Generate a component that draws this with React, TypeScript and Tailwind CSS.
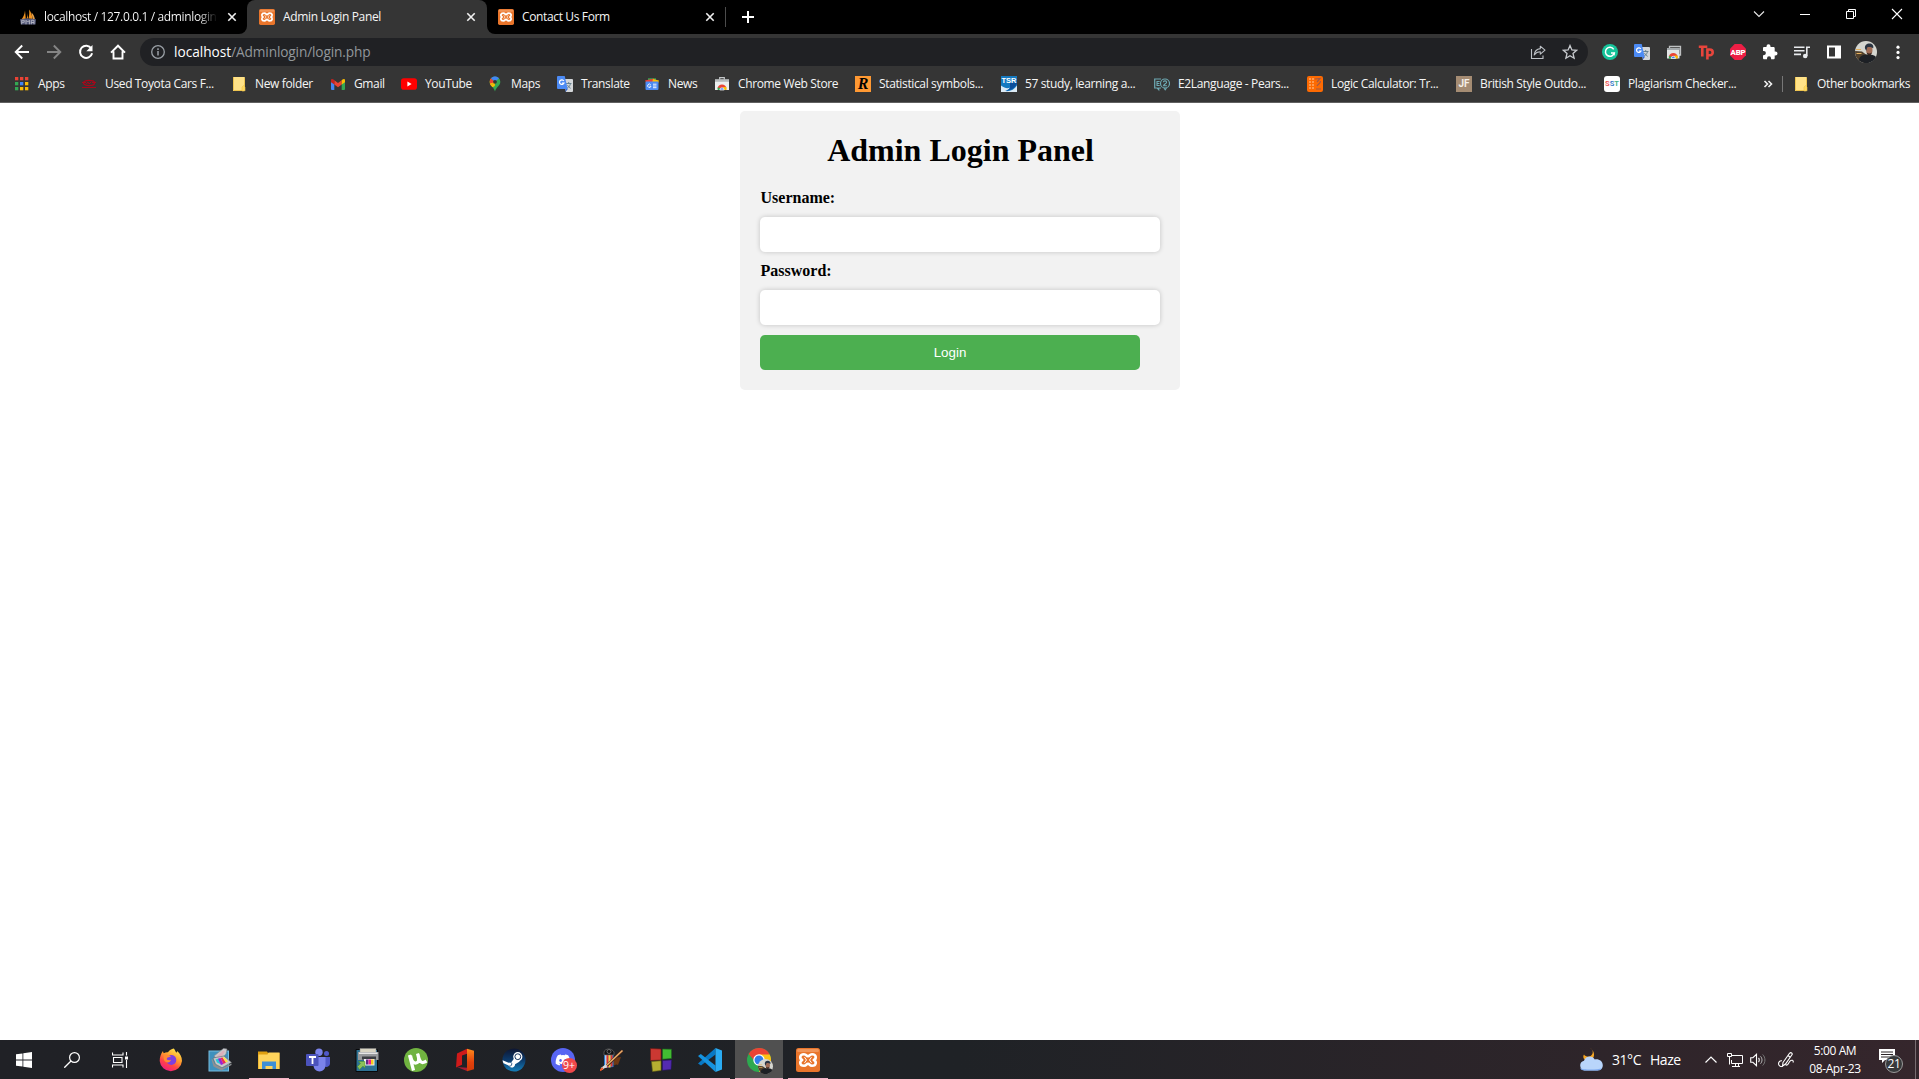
import React from 'react';
import { FaDiscord } from 'react-icons/fa';

type IconProps = { className?: string; children: React.ReactNode; box?: number };

function Svg({ className = 'size-4', children, box = 16 }: IconProps) {
  return (
    <svg className={`${className} shrink-0`} viewBox={`0 0 ${box} ${box}`} fill="none" aria-hidden="true">
      {children}
    </svg>
  );
}

/* ---------- shared glyphs ---------- */

const Xampp = ({ className = 'size-4' }: { className?: string }) => (
  <Svg className={className} box={24}>
    <rect width="24" height="24" rx="2.500" fill="#e9752b" />
    <rect x="1" y="1" width="22" height="3" rx="1.500" fill="#f3a36c" opacity=".7" />
    <path
      d="M8 6.200c-4.600 0-4.600 4.600-1.800 5.800-2.800 1.200-2.800 5.800 1.800 5.800 2.600 0 2.200-2.100 4-2.100s1.400 2.100 4 2.100c4.600 0 4.600-4.600 1.800-5.800 2.800-1.200 2.800-5.800-1.800-5.800-2.600 0-2.200 2.100-4 2.100S10.600 6.200 8 6.200z"
      stroke="#fff"
      strokeWidth="2.600"
      strokeLinejoin="round"
    />
    <path d="M8.500 9.200l2 2.800-2 2.800M15.500 9.200l-2 2.800 2 2.800" stroke="#fff" strokeWidth="1" />
  </Svg>
);

const Close = ({ className = 'size-4' }: { className?: string }) => (
  <Svg className={className}>
    <path d="M4.300 4.300l7.400 7.400M11.700 4.300l-7.400 7.400" stroke="#f1f1f1" strokeWidth="1.600" />
  </Svg>
);

const TranslateIcon = () => (
  <Svg>
    <path d="M6 3h9a1 1 0 011 1v11a1 1 0 01-1 1H9z" fill="#d4d7da" />
    <path d="M9 7.500h5.500M11.700 6v1.500M13.500 7.500c-.5 2.500-2 4-3.500 4.800M10.500 9c.6 1.500 2 2.800 3.200 3.300" stroke="#607d8b" strokeWidth=".9" />
    <path d="M1 0h6.700l3 13H1a1 1 0 01-1-1V1a1 1 0 011-1z" fill="#4c8bf5" />
    <path d="M8.700 13h2.100L8.500 16z" fill="#3367d6" />
    <path d="M6.800 4.900A2.300 2.300 0 107 7H4.900" stroke="#fff" strokeWidth="1.200" />
  </Svg>
);

const Folder = () => (
  <Svg>
    <path d="M2 1h11a1 1 0 011 1v8.500l-1 .5v4H2z" fill="#ffe288" />
    <path d="M2.500 1v13.500H12M13.500 2v8.500" stroke="#eec44f" />
    <path d="M11 15v-4l1.500-1.500L14 11v3.500l-.5.500z" fill="#ffd95e" stroke="#eec44f" strokeWidth=".6" />
  </Svg>
);

const ChromeArc = () => (
  <>
    <path d="M4.200 14a4.200 4.200 0 012-4.300L8 12v2z" fill="#34a853" />
    <path d="M3.600 12a4.500 4.500 0 018.800 0l-1.900 1h-5z" fill="#ea4335" />
    <path d="M9 11h3.200a4.200 4.200 0 01.3 3H9z" fill="#fbbc05" />
    <path d="M3.600 11.500a4 4 0 00.2 2.500H6v-2z" fill="#34a853" />
    <path d="M5.800 14a2.200 2.200 0 014.400 0z" fill="#4285f4" stroke="#fff" strokeWidth=".7" />
  </>
);

const Avatar = ({ className = '' }: { className?: string }) => (
  <Svg className={className} box={22}>
    <circle cx="11" cy="11" r="11" fill="#d5d6d0" />
    <path d="M.1 10L7 10.500l4 3 3 8A11 11 0 01.1 10z" fill="#51402c" />
    <path d="M3.500 19c1.500-4.500 5-5.500 9-5.500s7 .5 8.500 2.500A11 11 0 013.500 19z" fill="#1d2025" />
    <ellipse cx="14.300" cy="9" rx="3.200" ry="4.500" fill="#a06c55" />
    <path d="M10 7.500C9.500 4 12 2.400 14.500 2.500s4.500 1.800 3.700 4.800c-2-1.500-4.500-1.700-5.800-1-.6.800-.6 3-1.200 3.500z" fill="#2a3441" />
    <path d="M11.800 11.500c1.500 1.200 3.500 1.200 5 0-.3 2-1.200 3-2.500 3s-2.200-1-2.500-3z" fill="#33241f" />
    <path d="M1 8.500h5M1.500 12.500h5" stroke="#e5b15c" strokeWidth="1" />
  </Svg>
);

/* ---------- tab strip ---------- */

const PmaIcon = () => (
  <Svg>
    <path d="M5 1.500c-.3 4-1.800 7-4 9.300l4.800-1zM9 .5c2 2.500 3.500 6 3.300 9.500L8.500 9.500C9.300 6.500 9.500 3.500 9 .5zM7.500 3c.2 3-.2 5-1 6.700L8 9.400z" fill="#f0921e" />
    <path d="M11.500 3.500c2 2 3.200 4.500 3.400 7l-2.200-.5z" fill="#e3a04c" />
    <path d="M0 10.300c4-1 11-1 16 0l-.5 5.200H.8z" fill="#54597a" />
    <path d="M1.700 15.300v-4h2.500v2H2M6 15.300v-4l1.700 1.700 1.700-1.700v4M11.300 15.300v-4h2.700v4M11.300 13.500H14" stroke="#b9bac6" strokeWidth=".9" />
  </Svg>
);

function TabStrip() {
  return (
    <div className="flex h-[34px] bg-[#353535] text-[12px] tracking-[-0.360px]">
      <div className="flex w-[247px] items-center rounded-br-lg bg-black pl-5">
        <PmaIcon />
        <span className="ml-2 w-[176px] overflow-hidden whitespace-nowrap bg-linear-to-r from-white from-88% to-black bg-clip-text text-transparent">
          localhost / 127.0.0.1 / adminlogin
        </span>
        <Close className="ml-1 size-4" />
      </div>
      <div className="flex bg-black">
        <div className="flex w-[240px] items-center rounded-t-lg bg-[#353535] pl-3">
          <Xampp />
          <span className="ml-2 w-[180px] whitespace-nowrap">Admin Login Panel</span>
          <Close />
        </div>
      </div>
      <div className="flex grow rounded-bl-lg bg-black">
        <div className="flex w-[238px] items-center pl-[11px]">
          <Xampp />
          <span className="ml-2 grow whitespace-nowrap">Contact Us Form</span>
          <Close className="mr-[7px] size-4" />
        </div>
        <div className="mt-[7px] h-5 w-px bg-[#4c4c4c]" />
        <Svg className="ml-[14px] mt-[9px] size-4">
          <path d="M8 2v12M2 8h12" stroke="#fff" strokeWidth="2" />
        </Svg>
        <div className="ml-auto flex w-[184px] pt-[6px]">
          <Svg className="ml-4 size-4">
            <path d="M3 5.500l5 5 5-5" stroke="#e8e8e8" strokeWidth="1.100" />
          </Svg>
          <Svg className="ml-[30px] size-4">
            <path d="M3 8.500h10" stroke="#fff" />
          </Svg>
          <Svg className="ml-[30px] size-4">
            <path d="M3.500 5.500h7v7h-7zM5.500 5.500v-2h7v7h-2" stroke="#fff" />
          </Svg>
          <Svg className="ml-[30px] size-4">
            <path d="M3 3l10 10M13 3L3 13" stroke="#fff" strokeWidth="1.100" />
          </Svg>
        </div>
      </div>
    </div>
  );
}

/* ---------- toolbar ---------- */

function Toolbar() {
  return (
    <div className="flex h-9 items-center bg-[#353535] pl-[14px]">
      <Svg>
        <path d="M15 8H2M8.200 1.500L1.700 8l6.500 6.500" stroke="#fff" strokeWidth="1.900" />
      </Svg>
      <Svg className="ml-4 size-4">
        <path d="M1 8h13M7.800 1.500L14.300 8l-6.500 6.500" stroke="#858585" strokeWidth="1.900" />
      </Svg>
      <Svg className="ml-4 size-4">
        <path d="M13.300 4.500A6.100 6.100 0 1014.100 9.200" stroke="#fff" strokeWidth="2" />
        <path d="M14.500 1v6.200H8.300z" fill="#fff" />
      </Svg>
      <Svg className="ml-4 size-4">
        <path d="M1 8.600L8 1.700l7 6.900M3.500 7.200v7.300h9V7.200" stroke="#fff" strokeWidth="1.900" />
      </Svg>
      <div className="ml-[14px] flex h-7 w-[1448px] items-center rounded-full bg-[#202124] pl-[10px] text-[13.700px] tracking-[-0.020px]">
        <Svg>
          <circle cx="8" cy="8" r="6.300" stroke="#9aa0a6" strokeWidth="1.300" />
          <path d="M8 7v4.500M8 4.300v1.600" stroke="#9aa0a6" strokeWidth="1.500" />
        </Svg>
        <span className="ml-2 grow whitespace-nowrap text-white">
          localhost<span className="tracking-[-0.140px] text-[#92979b]">/Adminlogin/login.php</span>
        </span>
        <Svg className="mr-4 size-4">
          <path d="M1.500 5v9.500h11.500v-3" stroke="#bdc1c6" strokeWidth="1.100" />
          <path d="M10.300 2.200l4.700 4-4.700 4V7.800C7.500 7.800 5.600 9 4.200 11c.4-3.500 2.500-6 6.100-6.400z" stroke="#bdc1c6" strokeWidth="1.100" strokeLinejoin="round" />
        </Svg>
        <Svg className="mr-[10px] size-4">
          <path d="M8 1.500l1.900 4.400 4.700.4-3.600 3.200 1.100 4.700L8 11.700l-4.100 2.500L5 9.500 1.400 6.300l4.700-.4z" stroke="#c8cbcf" strokeWidth="1.300" />
        </Svg>
      </div>
      <div className="ml-[14px] flex items-center gap-4">
        <Svg>
          <circle cx="8" cy="8" r="8" fill="#15c39a" />
          <path d="M11.700 5.300A4.500 4.500 0 1012.300 9H9" stroke="#fff" strokeWidth="1.500" />
          <path d="M12.700 8.200v3.500l-2-1.700z" fill="#fff" />
        </Svg>
        <TranslateIcon />
        <Svg>
          <path d="M3.500 5V2.500h11v8.500H13" stroke="#bfc1c2" strokeWidth="1.300" />
          <path d="M1 4h12.500v10.500H1z" fill="#e3e5e6" />
          <path d="M1 4h12.500v2H1z" fill="#a4a9ac" />
          <g transform="translate(-.7 .5)">
            <ChromeArc />
          </g>
        </Svg>
        <Svg>
          <path d="M.8 2.800h8.500M4.300 2v10.500M9.400 15.500v-10h2.300c4 0 4 5.800 0 5.800H10" stroke="#e8453c" strokeWidth="2.600" />
        </Svg>
        <Svg>
          <path d="M4.700 0h6.600L16 4.700v6.600L11.300 16H4.700L0 11.300V4.700z" fill="#ed1e45" />
          <text x="8" y="10.800" textAnchor="middle" fontFamily="Roboto" fontSize="7.800" fontWeight="900" letterSpacing="-.2" fill="#fff">
            ABP
          </text>
        </Svg>
        <Svg>
          <path d="M13.500 7.500h-.8V4.300c0-.8-.6-1.300-1.400-1.300H8.500v-.8a2 2 0 00-4 0V3H2.300C1.500 3 1 3.500 1 4.300V7h.8a2.100 2.100 0 010 4.200H1v2.700c0 .7.500 1.300 1.300 1.300H5v-.8a2 2 0 014.100 0v.8h2.300c.8 0 1.300-.6 1.300-1.300v-2.400h.8a2 2 0 000-4z" fill="#fff" />
        </Svg>
        <Svg>
          <path d="M0 3.200h10.500M0 6.800h10.500M0 10.400h7M12.800 12V3.200H16" stroke="#e8eaed" strokeWidth="1.600" />
          <circle cx="11.200" cy="12" r="2.300" fill="#e8eaed" />
        </Svg>
        <Svg>
          <path d="M1 1.500h14v13H1zM3 3.500v9h6v-9z" fill="#fff" fillRule="evenodd" />
        </Svg>
      </div>
      <Avatar className="ml-[13px] size-[22px]" />
      <Svg className="ml-[13px] size-4">
        <circle cx="8" cy="3.200" r="1.600" fill="#fff" />
        <circle cx="8" cy="8.400" r="1.600" fill="#fff" />
        <circle cx="8" cy="13.600" r="1.600" fill="#fff" />
      </Svg>
    </div>
  );
}

/* ---------- bookmarks ---------- */

const appColors = ['#ea4335', '#ea4335', '#ea4335', '#34a853', '#4285f4', '#fbbc05', '#34a853', '#fbbc05', '#fbbc05'];

const bookmarks: { label: string; slot: string; icon: React.ReactNode }[] = [
  {
    label: 'Apps',
    slot: 'w-[67px]',
    icon: (
      <Svg>
        {appColors.map((c, i) => (
          <rect key={i} x={1 + (i % 3) * 5} y={1 + Math.floor(i / 3) * 5} width="3.300" height="3.300" fill={c} />
        ))}
      </Svg>
    ),
  },
  {
    label: 'Used Toyota Cars F...',
    slot: 'w-[150px]',
    icon: (
      <Svg>
        <ellipse cx="8" cy="7" rx="5.500" ry="2.600" stroke="#a8071a" strokeWidth="1.300" />
        <path d="M1 6.500h4M11 6.500h4M5.500 8l1.500-2 1 2 2-2M1 11.500h14" stroke="#a8071a" strokeWidth="1" />
      </Svg>
    ),
  },
  { label: 'New folder', slot: 'w-[99px]', icon: <Folder /> },
  {
    label: 'Gmail',
    slot: 'w-[71px]',
    icon: (
      <Svg>
        <path d="M1 4.500l3.300 2.400V14H2a1 1 0 01-1-1z" fill="#4285f4" />
        <path d="M15 4.500l-3.300 2.400V14H14a1 1 0 001-1z" fill="#34a853" />
        <path d="M4.300 4.300L8 7l3.700-2.700V8.500L8 11.200 4.300 8.500z" fill="#ea4335" />
        <path d="M1 4.500C1 2.700 2.500 2.700 3.500 3.600l.8.700v4.200L1 6.200z" fill="#c5221f" />
        <path d="M15 4.500c0-1.800-1.500-1.800-2.500-.9l-.8.700v4.200L15 6.200z" fill="#fbbc04" />
      </Svg>
    ),
  },
  {
    label: 'YouTube',
    slot: 'w-[86px]',
    icon: (
      <Svg>
        <rect x="0" y="2.300" width="16" height="11.400" rx="2.800" fill="#f00" />
        <path d="M6.400 5.600l4.200 2.400-4.200 2.400z" fill="#fff" />
      </Svg>
    ),
  },
  {
    label: 'Maps',
    slot: 'w-[70px]',
    icon: (
      <Svg>
        <path d="M8 .5a5.300 5.300 0 00-5.300 5.300C2.700 10 7 11 8 15.500 9 11 13.300 10 13.300 5.800A5.300 5.300 0 008 .5z" fill="#34a853" />
        <path d="M3.500 3L8 6 3.800 9.500C2.400 7.500 2.500 4.800 3.500 3z" fill="#fbbc04" />
        <path d="M4 2.300L8 6 3.200 7.600C2.500 5.500 2.700 3.500 4 2.300z" fill="#ea4335" />
        <path d="M4 2.300C6 0 10 0 12 2.300L8 6z" fill="#4285f4" />
        <path d="M3.800 9.500L8 6l-.2 4L5.500 11.200z" fill="#fbbc04" />
        <circle cx="8" cy="5.800" r="1.900" fill="#353535" />
      </Svg>
    ),
  },
  { label: 'Translate', slot: 'w-[87px]', icon: <TranslateIcon /> },
  {
    label: 'News',
    slot: 'w-[70px]',
    icon: (
      <Svg>
        <path d="M4 2.300h8v4H4z" fill="#34a853" />
        <path d="M1 4.500l9-2 .5 4H2z" fill="#ea4335" />
        <path d="M9 3l6 1.500-1 3H8z" fill="#fbbc04" />
        <rect x="1.500" y="5.500" width="13" height="8.500" rx="1" fill="#4c8bf5" />
        <path d="M6.700 8.700A1.700 1.700 0 107 10.200H5.500M9 8.200h3.500M9 10h3.500M9 11.700h3.500" stroke="#fff" strokeWidth=".9" />
      </Svg>
    ),
  },
  {
    label: 'Chrome Web Store',
    slot: 'w-[141px]',
    icon: (
      <Svg>
        <path d="M5.700 3.500V1.700h4.600v1.800" stroke="#c3c6c8" strokeWidth="1.200" />
        <path d="M1 3.500h14V14H1z" fill="#eceeef" />
        <path d="M1 3.500h14v2.300H1z" fill="#b5b9bb" />
        <ChromeArc />
      </Svg>
    ),
  },
  {
    label: 'Statistical symbols...',
    slot: 'w-[146px]',
    icon: (
      <span className="flex size-4 shrink-0 items-center justify-center bg-[#ff9933] font-['Liberation_Serif'] text-[16px] font-bold italic leading-none tracking-normal text-black">
        R
      </span>
    ),
  },
  {
    label: '57 study, learning a...',
    slot: 'w-[153px]',
    icon: (
      <Svg>
        <rect width="16" height="16" fill="#1579c0" />
        <path d="M0 9.500c4 3 6 3 9 2.300-1.500 1.800-3 2.700-5 3.200 5 .8 9.500-1.500 12-5.500V16H0z" fill="#dceaf5" />
        <path d="M9 11.800c-.5 1.500-2.500 2.500-4 3 5-.3 9-2.800 11-7v-1H9z" fill="#0b4e9b" />
        <text x="8" y="6.500" textAnchor="middle" fontFamily="Liberation Sans" fontSize="7.500" fontWeight="700" letterSpacing="0" fill="#fff">
          TSR
        </text>
      </Svg>
    ),
  },
  {
    label: 'E2Language - Pears...',
    slot: 'w-[153px]',
    icon: (
      <Svg>
        <path d="M7 3H.700v9h2.600l1.400 1.700V12H7" stroke="#6eaab4" strokeWidth="1.200" />
        <path d="M5.700 5.500H3v4h2.700M3 7.500h2.400" stroke="#6eaab4" strokeWidth="1.100" />
        <circle cx="11" cy="7.500" r="4.500" stroke="#6eaab4" strokeWidth="1.200" />
        <path d="M9.400 6.300c0-1.900 3.200-1.900 3.200 0 0 1.300-2.800 1.700-3.100 3.500h3.400M10 12l1.200 1.700L12.500 12" stroke="#6eaab4" strokeWidth="1.100" />
      </Svg>
    ),
  },
  {
    label: 'Logic Calculator: Tr...',
    slot: 'w-[149px]',
    icon: (
      <Svg>
        <rect width="16" height="16" rx="2" fill="#fd6a02" />
        {[2, 5, 8, 11].map((y) => (
          <path key={y} d={`M2 ${y + 1}h2M5 ${y + 1}h2`} stroke="#ff9a4f" strokeWidth="2" />
        ))}
        <path d="M8 3l5-.5L10 6M13.500 5c0 3-2 2-3.500 5M9 13h5" stroke="#a05a48" strokeWidth="1.200" />
      </Svg>
    ),
  },
  {
    label: 'British Style Outdo...',
    slot: 'w-[148px]',
    icon: (
      <span className="flex size-4 shrink-0 items-center justify-center bg-[#a58c73] font-['Roboto'] text-[10px] font-bold leading-none tracking-normal text-[#f4efe8]">
        JF
      </span>
    ),
  },
  {
    label: 'Plagiarism Checker...',
    slot: 'w-[156px]',
    icon: (
      <span className="flex size-4 shrink-0 items-center justify-center rounded-[3px] bg-white font-['Roboto'] text-[7.500px] font-bold leading-none tracking-normal">
        <span className="text-[#ee5a5a]">S</span>
        <span className="text-[#3f7fc8]">S</span>
        <span className="text-[#47b38a]">T</span>
      </span>
    ),
  },
];

function BookmarksBar() {
  return (
    <div className="flex h-[33px] items-center border-b border-[#606060] bg-[#353535] pl-[14px] pb-1 text-[12px] tracking-[-0.360px]">
      {bookmarks.map((b) => (
        <div key={b.label} className={`flex shrink-0 items-center gap-2 whitespace-nowrap ${b.slot}`}>
          {b.icon}
          <span>{b.label}</span>
        </div>
      ))}
      <Svg>
        <path d="M4.500 5l3 3-3 3M8.500 5l3 3-3 3" stroke="#f1f1f1" strokeWidth="1.600" />
      </Svg>
      <div className="ml-[6px] h-4 w-px bg-[#777]" />
      <div className="ml-[10px] flex items-center gap-2 whitespace-nowrap">
        <Folder />
        <span>Other bookmarks</span>
      </div>
    </div>
  );
}

/* ---------- page ---------- */

function LoginCard() {
  const input = 'block h-[35px] w-[400px] rounded-[5px] bg-white px-2.5 shadow-[0_0_5px_rgba(0,0,0,0.2)] outline-none';
  return (
    <form
      className="mx-auto h-[279px] w-[440px] rounded-[5px] bg-[#f2f2f2] p-5 font-['Liberation_Serif',serif] text-black"
      onSubmit={(e) => e.preventDefault()}
    >
      <h1 className="pt-px pl-[2px] text-center text-[32px] font-bold leading-[37px]">Admin Login Panel</h1>
      <label htmlFor="username" className="mt-5 block pl-px text-base font-bold leading-[18px]">
        Username:
      </label>
      <input id="username" className={`mt-[10px] ${input}`} />
      <label htmlFor="password" className="mt-[10px] block pl-px text-base font-bold leading-[18px]">
        Password:
      </label>
      <input id="password" type="password" className={`mt-[10px] ${input}`} />
      <button className="mt-[10px] block h-[35px] w-[380px] rounded-[5px] bg-[#4caf50] pl-px font-['Liberation_Sans',sans-serif] text-[13.330px] text-white">
        Login
      </button>
    </form>
  );
}

/* ---------- taskbar ---------- */

const taskIcons: { name: string; state?: 'open' | 'active'; icon: React.ReactNode }[] = [
  {
    name: 'Firefox',
    icon: (
      <Svg className="size-6" box={24}>
        <defs>
          <linearGradient id="fx" x1="18" y1="2" x2="7" y2="22" gradientUnits="userSpaceOnUse">
            <stop stopColor="#ffe14a" />
            <stop offset=".4" stopColor="#ff9a2e" />
            <stop offset=".7" stopColor="#ff4545" />
            <stop offset="1" stopColor="#f0207c" />
          </linearGradient>
        </defs>
        <path d="M14.800.500c1.200 1.500 1.700 2.800 2.500 4.200.7-.5.800-1.200.8-1.700 3 2.500 4.900 6 4.900 10a11.200 11.200 0 01-22.300 0C.7 9 2 5.500 4 3c0 1 .3 1.800.8 2.300C6 4.500 7.500 4 9 4.200c1.500-2.200 3.500-3.200 5.800-3.700z" fill="url(#fx)" />
        <circle cx="12.300" cy="12" r="5" fill="#7d3fe0" />
        <path d="M5 7c3-1 6 0 7 2.200-2.500-.5-4 .5-4.500 2 1.500 1 3 1.500 4.500.6-.5 2.400-3.500 3.500-6 1.700C4.500 12 4.300 9 5 7z" fill="#ff8b33" />
      </Svg>
    ),
  },
  {
    name: 'Scanner',
    icon: (
      <Svg className="size-6" box={24}>
        <rect x="1" y="3" width="19.500" height="20" fill="#3f91bd" stroke="#76bde0" />
        <path d="M6 8L15.500.5 19 1l-1 5-7 6.500z" fill="#c9cacd" stroke="#85888d" strokeWidth=".6" />
        <path d="M8 9l7-6.500L17 3l-2 4-5 4z" fill="#dcb0bc" />
        <path d="M4 10.500l3 6 7.500 3.500 9-4.500v1.500l-10 5.500-8-4-2-7z" fill="#8d9092" />
        <path d="M5 10l11-2 7.500 6.500-9.500 5.200-6.500-3.500z" fill="#c7c8c9" stroke="#65686b" strokeWidth=".6" />
        <path d="M7.500 11.500l3-1 2.500 6-4-2z" fill="#29c8d8" />
        <path d="M10 10.700l2.500-.7 3 6-2.500 1z" fill="#9923d0" />
        <path d="M12.500 10l2-.5 3.500 5-2.500 1.500z" fill="#ed2959" />
        <path d="M14.500 9.500l1.500-.3 4 4.300-2 1z" fill="#ffe33c" />
      </Svg>
    ),
  },
  {
    name: 'File Explorer',
    state: 'open',
    icon: (
      <Svg className="size-6" box={24}>
        <path d="M1 3.500V21h21.500V5H11l-1-1.500z" fill="#e0a010" />
        <path d="M1.500 6.500h9l1-2h11V21h-21z" fill="#ffd45c" />
        <path d="M5 21v-7.500h14V21h-3.500v-3h-7v3z" fill="#3e8fd6" />
      </Svg>
    ),
  },
  {
    name: 'Teams',
    icon: (
      <Svg className="size-6" box={24}>
        <circle cx="20.500" cy="5.500" r="2.500" fill="#5059c9" />
        <path d="M17 9h7v6.500c0 3-4 4.500-6 2.500z" fill="#5059c9" />
        <circle cx="13" cy="4.300" r="3.700" fill="#7b83eb" />
        <path d="M7.500 9h12v8c0 8.500-12 8.500-12 0z" fill="#7b83eb" />
        <rect y="6" width="12.500" height="12" rx="1" fill="#4b53bc" />
        <path d="M3 9h7M6.500 9v7" stroke="#fff" strokeWidth="1.800" />
      </Svg>
    ),
  },
  {
    name: 'Printer',
    icon: (
      <Svg className="size-6" box={24}>
        <path d="M1 1.500h21.500v22H1z" fill="#2d7294" stroke="#07080a" />
        <path d="M5 .5h16v7H5z" fill="#d9d5c3" stroke="#888" strokeWidth=".5" />
        <path d="M3 4h20.500v8H3z" fill="#97999b" />
        <path d="M4 4.500h18.500V6H4z" fill="#e5e5e5" />
        <path d="M7 8.500h14v3H7z" fill="#3a3d42" />
        <path d="M9 11h10.500v6.500H9z" fill="#f2f2f2" />
        <path d="M11 11.500h2.500v5H11z" fill="#5c2a86" />
        <path d="M13.500 11.500H16v5h-2.500z" fill="#e52294" />
        <path d="M16 11.500h2.500v5H16z" fill="#f8cb1b" />
        <path d="M2.500 18.500L5.500 15.500l-2-2H10V20l-2-2-3.500 3.500z" fill="#8bc15a" stroke="#4d9328" strokeWidth=".5" />
      </Svg>
    ),
  },
  {
    name: 'uTorrent',
    icon: (
      <Svg className="size-6" box={24}>
        <circle cx="12" cy="12" r="12" fill="#70b340" />
        <path d="M5.500 7l4 15.500M6.500 7.500c.8 4.500 2.500 8 5.500 7.500 3-.5 3.500-3 1.500-9.500M14 6.500c1 5 2 8.500 5 8 1.500-.3 2.300-.8 3.500-1.500" stroke="#fff" strokeWidth="3.200" />
      </Svg>
    ),
  },
  {
    name: 'Office',
    icon: (
      <Svg className="size-6" box={24}>
        <defs>
          <linearGradient id="office" x1="0" y1="1" x2="0" y2="23" gradientUnits="userSpaceOnUse">
            <stop stopColor="#ff8a1c" />
            <stop offset=".6" stopColor="#e2410c" />
            <stop offset="1" stopColor="#d03a08" />
          </linearGradient>
        </defs>
        <path d="M4 5.500L14 .8v5L9 7.500v9.200L3 19.500z" fill="#d01a1a" />
        <path d="M4 19l10.500.7v3.600z" fill="#a81c35" />
        <path d="M14 .8L21 2.800v18.500l-7 2z" fill="url(#office)" />
      </Svg>
    ),
  },
  {
    name: 'Steam',
    icon: (
      <Svg className="size-6" box={24}>
        <defs>
          <linearGradient id="steam" x1="0" y1="1" x2="0" y2="23" gradientUnits="userSpaceOnUse">
            <stop stopColor="#0e1733" />
            <stop offset=".5" stopColor="#0c3a6b" />
            <stop offset="1" stopColor="#157cb6" />
          </linearGradient>
        </defs>
        <circle cx="12" cy="12" r="11.500" fill="url(#steam)" />
        <path d="M.6 12.200l6 2.500 2.500-.2 3.200-4.300h6.500l-1.500 3.500-4.200 2.500c0 3.500-5.200 4.800-6.500 1.400L1.500 15.300C1 14.300.700 13.300.6 12.200z" fill="#fff" />
        <circle cx="15.800" cy="8.700" r="4.600" fill="#fff" />
        <circle cx="15.800" cy="8.700" r="2.900" fill="#fff" stroke="#16345c" strokeWidth="1" />
        <path d="M7 18.200a2.200 2.200 0 001.700-4" stroke="#1a4877" strokeWidth=".9" />
      </Svg>
    ),
  },
  {
    name: 'Discord',
    icon: (
      <span className="relative flex size-6 items-center justify-center rounded-full bg-[#5865f2]">
        <FaDiscord className="size-4 text-white" />
        <span className="absolute -right-[2px] -bottom-[1px] flex size-[15px] items-center justify-center rounded-full bg-[#f0484b] text-[10.500px] leading-none">
          9+
        </span>
      </span>
    ),
  },
  {
    name: 'Paint tools',
    icon: (
      <Svg className="size-6" box={24}>
        <path d="M12 10l9-1-3 8c-2-2-4 2-6-1z" fill="#6f3813" />
        <path d="M4 6h9.500v13L4 20z" fill="#2878d0" />
        <path d="M6 7v13" stroke="#f3f3f3" strokeWidth="1.400" />
        <path d="M7.500 7v12.500M11.500 6v12.500" stroke="#e3322c" strokeWidth="2" />
        <path d="M9.500 7v12.500" stroke="#f9cb45" strokeWidth="2" />
        <path d="M4 7V4c1-4 8-4 10 0v3z" fill="#101113" stroke="#777" strokeWidth=".6" />
        <circle cx="9" cy="3.500" r="2" stroke="#888" strokeWidth=".7" />
        <path d="M1.500 21l6-4.500" stroke="#d9dadc" strokeWidth="2.400" />
        <path d="M7 17.500L22.500 2.500" stroke="#492316" strokeWidth="2.800" />
        <path d="M7 17L22.500 2.500" stroke="#e8ad6c" strokeWidth="1.600" />
        <path d="M0 22.500l3-2.500" stroke="#ee5b2b" strokeWidth="2" />
      </Svg>
    ),
  },
  {
    name: 'Color blocks',
    icon: (
      <Svg className="size-6" box={24}>
        <path d="M1.500.5L12 1v11l-10.500.5z" fill="#cb3832" stroke="#701713" strokeWidth=".6" />
        <path d="M13.500 1L22.500 1.200v9.300l-9 .7z" fill="#42bb32" stroke="#1c651c" strokeWidth=".6" />
        <path d="M2.500 13.500L12 12.800v9.700L3.500 23.500z" fill="#b6ae31" stroke="#676315" strokeWidth=".6" />
        <path d="M13.500 12.500l9-.5-.5 9.500-8.500.8z" fill="#542bb0" stroke="#2a126d" strokeWidth=".6" />
      </Svg>
    ),
  },
  {
    name: 'Visual Studio Code',
    state: 'open',
    icon: (
      <Svg className="size-6" box={24}>
        <path d="M17.500 0v6.500L3 17.500 0 15.500 17 .500z" fill="#0878c4" />
        <path d="M0 8l2.800-2L17.500 17.500V24z" fill="#1593e0" />
        <path d="M17.500 0L24 2.500v19L17.500 24z" fill="#2aabf2" />
      </Svg>
    ),
  },
  {
    name: 'Chrome',
    state: 'active',
    icon: (
      <span className="relative block size-6">
        <Svg className="size-6" box={24}>
          <circle cx="12" cy="12" r="12" fill="#2da94f" />
          <path d="M1.600 6A12 12 0 0122.400 6L17 12H6.800z" fill="#ea4335" />
          <path d="M12 6.500h10.700A12 12 0 0112 24l5-9z" fill="#fbc116" />
          <circle cx="12" cy="12" r="5.700" fill="#fff" />
          <circle cx="12" cy="12" r="4.500" fill="#2f7de9" />
        </Svg>
        <Avatar className="absolute -right-[2px] -bottom-[2px] size-[15px]" />
      </span>
    ),
  },
  { name: 'XAMPP', state: 'open', icon: <Xampp className="size-6" /> },
];

function TaskIcon({ name, state, icon }: (typeof taskIcons)[number]) {
  return (
    <div className="flex w-[49px] justify-center" aria-label={name}>
      <div
        className={
          state === 'active'
            ? 'flex h-full w-12 items-center justify-center border-b border-[#f3b4c8] bg-[#505050] pt-px'
            : state === 'open'
              ? 'flex h-full w-10 items-center justify-center border-b border-[#f3b4c8] pt-px'
              : 'flex h-full w-10 items-center justify-center'
        }
      >
        {icon}
      </div>
    </div>
  );
}

function Taskbar() {
  return (
    <div className="flex h-[39px] shrink-0 bg-linear-to-r from-[#202126] via-[#1f2226] to-[#35262c] text-white">
      <div className="flex w-12 items-center justify-center">
        <Svg>
          <path d="M0 2.300L6.500 1.400v6.200H0zM7.300 1.300L16 0v7.600H7.300zM0 8.400h6.500v6.200L0 13.700zM7.300 8.400H16V16l-8.700-1.300z" fill="#fff" />
        </Svg>
      </div>
      <div className="flex w-12 items-center justify-center">
        <Svg>
          <circle cx="10.500" cy="5.500" r="4.900" stroke="#fff" strokeWidth="1.200" />
          <path d="M7 9L.3 15.700" stroke="#fff" strokeWidth="1.300" />
        </Svg>
      </div>
      <div className="flex w-[50px] items-center justify-center pr-[2px]">
        <Svg>
          <path d="M.5.500v2.500h10.500V.5M.5 15.500V13h10.500v2.500M1.500 5.500h8.500v5H1.500zM14.500 0v3.500M14.500 8v8" stroke="#fff" strokeWidth="1.100" />
          <path d="M13 4.500h3v3h-3z" fill="#fff" />
        </Svg>
      </div>
      {taskIcons.map((t) => (
        <TaskIcon key={t.name} {...t} />
      ))}
      <div className="ml-auto flex items-center">
        <Svg className="size-6" box={24}>
          <path d="M11 0c4.500 2.500 3 7.500-.5 8.500-2 .5-4.500-.2-5.500-2C2.500 10 7 14.500 12 12c4-2 4.500-8.500-1-12z" fill="#f6a623" />
          <path d="M5.500 22.500a5 5 0 01-.5-9.800C6.500 7.500 13.500 7 15.800 11.500c4-.8 8 1.500 8 5.800 0 3.500-2.500 5.200-5.300 5.200z" fill="#b9d5fb" />
          <path d="M1 20c3 2 18 2 22 0-1 1.700-2.500 2.500-4.500 2.500h-13C3.500 22.500 2 21.800 1 20z" fill="#7eaaf0" />
        </Svg>
        <span className="ml-[9px] w-[38px] whitespace-nowrap text-[14px] tracking-[-0.450px]">31°C</span>
        <span className="w-[49px] whitespace-nowrap text-[14px] tracking-[-0.450px]">Haze</span>
        <Svg className="ml-1 size-4">
          <path d="M2.500 10.500L8 5l5.500 5.500" stroke="#fff" strokeWidth="1.200" />
        </Svg>
        <Svg className="ml-2 size-4">
          <path d="M5 3.500h10.500v8H4.500V8M8.500 11.500v3M11.500 11.500v3M5 14.500h8M.5 1.500h4v3h-4zM2.500 4.500v8" stroke="#fff" />
        </Svg>
        <Svg className="ml-[7px] size-4">
          <path d="M.7 5.700h2.200L6.500 2.300v11.400L2.900 10.300H.7zM8.500 6c1 1 1 3 0 4" stroke="#fff" strokeWidth="1.100" />
          <path d="M10.500 4.300c2 2 2 5.400 0 7.400" stroke="#b5b5b5" />
          <path d="M12.700 2.500c3 3 3 8 0 11" stroke="#777" />
        </Svg>
        <Svg className="ml-[12px] size-4">
          <path d="M5 10.500L11.500 1.300c1.500-1.500 3.500 0 2.300 1.700L7.500 12l-3 2zM10 3.500l2.300 1.700" stroke="#fff" strokeWidth="1.100" />
          <path d="M4 8.800C1.500 8.500 0 10.500.8 12.800c.8 2 3 2 3.700 1.200M7.500 12.500c2 2 3-1.500 4.500-3.300 1.500-1.700 4-1 3 1.300" stroke="#fff" strokeWidth="1.100" />
        </Svg>
        <div className="ml-[10px] flex w-[62px] flex-col items-center whitespace-nowrap text-[12px] leading-[18px] tracking-[-0.380px]">
          <span>5:00 AM</span>
          <span>08-Apr-23</span>
        </div>
        <div className="relative ml-3 h-[26px] w-[25px]">
          <Svg className="size-[18px]" box={18}>
            <path d="M1 2h16v11H7l-3 3v-3H1z" fill="#fff" />
            <path d="M3 5h12M3 7.500h12M3 10h12" stroke="#2b2427" strokeWidth="1" />
          </Svg>
          <span className="absolute right-0 bottom-0 flex size-[18px] items-center justify-center rounded-full border border-[#9a9a9a] bg-[#37393b] text-[12px] leading-none tracking-tight">
            21
          </span>
        </div>
        <div className="ml-[12px] mr-[3px] h-[39px] w-px bg-[#786c70]" />
      </div>
    </div>
  );
}

export default function App() {
  return (
    <div className="flex h-[1079px] w-[1919px] flex-col overflow-hidden bg-white font-['Open_Sans','Noto_Sans',sans-serif] text-[#f5f5f5]">
      <div className="bg-[#353535]">
        <TabStrip />
        <Toolbar />
        <BookmarksBar />
      </div>
      <main className="grow pt-2">
        <LoginCard />
      </main>
      <Taskbar />
    </div>
  );
}
